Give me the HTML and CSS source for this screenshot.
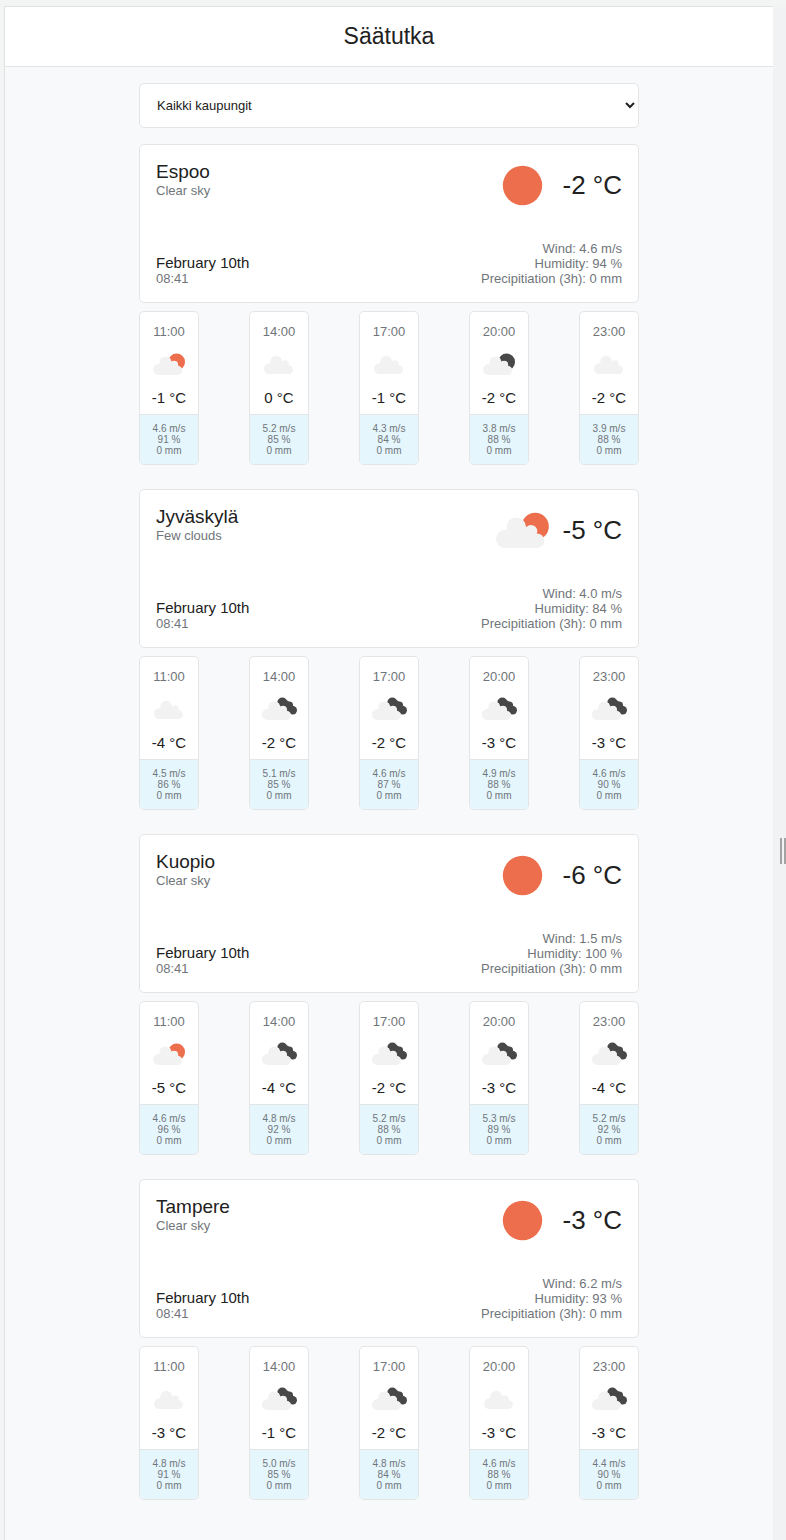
FILE: index.html
```html
<!DOCTYPE html>
<html lang="fi">
<head>
<meta charset="utf-8">
<meta name="viewport" content="width=device-width, initial-scale=1">
<title>Säätutka</title>
<link rel="stylesheet" href="styles.css">
</head>
<body>
<svg class="sprite" aria-hidden="true">
  <defs>
    <g id="cloud">
      <circle cx="12.5" cy="38.5" r="9"/>
      <circle cx="23.800" cy="26.800" r="9.800"/>
      <circle cx="38.500" cy="30.800" r="6.300"/>
      <circle cx="44.5" cy="40.2" r="7.300"/>
      <path d="M12.5 30 24 25 38 28 46 38V47.5H12.5Z"/>
    </g>
    <symbol id="clear" viewBox="-0.500 5.500 60 48"><circle class="sun" cx="30" cy="30" r="19.7"/></symbol>
    <symbol id="few-big" viewBox="-0.500 5.500 60 48"><circle class="sun" cx="42.700" cy="25.900" r="13.6"/><use href="#cloud" class="cloud"/></symbol>
    <symbol id="few" viewBox="0 1 60 60"><circle class="sun" cx="42.700" cy="25.900" r="14"/><use href="#cloud" class="cutout"/><use href="#cloud" class="cloud"/></symbol>
    <symbol id="night" viewBox="0 1 60 60"><circle class="dark" cx="42.700" cy="25.900" r="14"/><use href="#cloud" class="cutout"/><use href="#cloud" class="cloud"/></symbol>
    <symbol id="clouds" viewBox="0 1 60 60"><use href="#cloud" class="cloud" x="1.500" y="-1.500"/></symbol>
    <symbol id="broken" viewBox="0 1 60 60">
      <g class="dark"><circle cx="35.500" cy="18.500" r="8.300"/><circle cx="47" cy="23.500" r="6.500"/><circle cx="53" cy="31.500" r="7"/><path d="M30 18 38 11 49 19 57 28 52 38 44 35Z"/></g>
      <use href="#cloud" class="cutout" x="-2"/><use href="#cloud" class="cloud" x="-2"/>
    </symbol>
  </defs>
</svg>
<div class="window">
  <div class="app">
    <header class="header"><h1 class="title">Säätutka</h1></header>
    <main class="content">
      <select class="picker" aria-label="Kaupunki">
        <option>Kaikki kaupungit</option><option>Espoo</option><option>Jyväskylä</option><option>Kuopio</option><option>Tampere</option>
      </select>

      <section class="city">
        <article class="card">
          <div class="row">
            <div><h2 class="name">Espoo</h2><p class="muted">Clear sky</p></div>
            <div class="now"><svg class="icon"><use href="#clear"/></svg><span class="temp">-2 °C</span></div>
          </div>
          <div class="row row-end">
            <div><p class="date">February 10th</p><p class="muted">08:41</p></div>
            <div class="muted stats"><p>Wind: 4.6 m/s</p><p>Humidity: 94 %</p><p>Precipitiation (3h): 0 mm</p></div>
          </div>
        </article>
        <ul class="slots">
          <li class="slot"><div class="slot-main"><time>11:00</time><svg class="slot-icon"><use href="#few"/></svg><span class="slot-temp">-1 °C</span></div><div class="slot-stats"><p>4.6 m/s</p><p>91 %</p><p>0 mm</p></div></li>
          <li class="slot"><div class="slot-main"><time>14:00</time><svg class="slot-icon"><use href="#clouds"/></svg><span class="slot-temp">0 °C</span></div><div class="slot-stats"><p>5.2 m/s</p><p>85 %</p><p>0 mm</p></div></li>
          <li class="slot"><div class="slot-main"><time>17:00</time><svg class="slot-icon"><use href="#clouds"/></svg><span class="slot-temp">-1 °C</span></div><div class="slot-stats"><p>4.3 m/s</p><p>84 %</p><p>0 mm</p></div></li>
          <li class="slot"><div class="slot-main"><time>20:00</time><svg class="slot-icon"><use href="#night"/></svg><span class="slot-temp">-2 °C</span></div><div class="slot-stats"><p>3.8 m/s</p><p>88 %</p><p>0 mm</p></div></li>
          <li class="slot"><div class="slot-main"><time>23:00</time><svg class="slot-icon"><use href="#clouds"/></svg><span class="slot-temp">-2 °C</span></div><div class="slot-stats"><p>3.9 m/s</p><p>88 %</p><p>0 mm</p></div></li>
        </ul>
      </section>

      <section class="city">
        <article class="card">
          <div class="row">
            <div><h2 class="name">Jyväskylä</h2><p class="muted">Few clouds</p></div>
            <div class="now"><svg class="icon"><use href="#few-big"/></svg><span class="temp">-5 °C</span></div>
          </div>
          <div class="row row-end">
            <div><p class="date">February 10th</p><p class="muted">08:41</p></div>
            <div class="muted stats"><p>Wind: 4.0 m/s</p><p>Humidity: 84 %</p><p>Precipitiation (3h): 0 mm</p></div>
          </div>
        </article>
        <ul class="slots">
          <li class="slot"><div class="slot-main"><time>11:00</time><svg class="slot-icon"><use href="#clouds"/></svg><span class="slot-temp">-4 °C</span></div><div class="slot-stats"><p>4.5 m/s</p><p>86 %</p><p>0 mm</p></div></li>
          <li class="slot"><div class="slot-main"><time>14:00</time><svg class="slot-icon"><use href="#broken"/></svg><span class="slot-temp">-2 °C</span></div><div class="slot-stats"><p>5.1 m/s</p><p>85 %</p><p>0 mm</p></div></li>
          <li class="slot"><div class="slot-main"><time>17:00</time><svg class="slot-icon"><use href="#broken"/></svg><span class="slot-temp">-2 °C</span></div><div class="slot-stats"><p>4.6 m/s</p><p>87 %</p><p>0 mm</p></div></li>
          <li class="slot"><div class="slot-main"><time>20:00</time><svg class="slot-icon"><use href="#broken"/></svg><span class="slot-temp">-3 °C</span></div><div class="slot-stats"><p>4.9 m/s</p><p>88 %</p><p>0 mm</p></div></li>
          <li class="slot"><div class="slot-main"><time>23:00</time><svg class="slot-icon"><use href="#broken"/></svg><span class="slot-temp">-3 °C</span></div><div class="slot-stats"><p>4.6 m/s</p><p>90 %</p><p>0 mm</p></div></li>
        </ul>
      </section>

      <section class="city">
        <article class="card">
          <div class="row">
            <div><h2 class="name">Kuopio</h2><p class="muted">Clear sky</p></div>
            <div class="now"><svg class="icon"><use href="#clear"/></svg><span class="temp">-6 °C</span></div>
          </div>
          <div class="row row-end">
            <div><p class="date">February 10th</p><p class="muted">08:41</p></div>
            <div class="muted stats"><p>Wind: 1.5 m/s</p><p>Humidity: 100 %</p><p>Precipitiation (3h): 0 mm</p></div>
          </div>
        </article>
        <ul class="slots">
          <li class="slot"><div class="slot-main"><time>11:00</time><svg class="slot-icon"><use href="#few"/></svg><span class="slot-temp">-5 °C</span></div><div class="slot-stats"><p>4.6 m/s</p><p>96 %</p><p>0 mm</p></div></li>
          <li class="slot"><div class="slot-main"><time>14:00</time><svg class="slot-icon"><use href="#broken"/></svg><span class="slot-temp">-4 °C</span></div><div class="slot-stats"><p>4.8 m/s</p><p>92 %</p><p>0 mm</p></div></li>
          <li class="slot"><div class="slot-main"><time>17:00</time><svg class="slot-icon"><use href="#broken"/></svg><span class="slot-temp">-2 °C</span></div><div class="slot-stats"><p>5.2 m/s</p><p>88 %</p><p>0 mm</p></div></li>
          <li class="slot"><div class="slot-main"><time>20:00</time><svg class="slot-icon"><use href="#broken"/></svg><span class="slot-temp">-3 °C</span></div><div class="slot-stats"><p>5.3 m/s</p><p>89 %</p><p>0 mm</p></div></li>
          <li class="slot"><div class="slot-main"><time>23:00</time><svg class="slot-icon"><use href="#broken"/></svg><span class="slot-temp">-4 °C</span></div><div class="slot-stats"><p>5.2 m/s</p><p>92 %</p><p>0 mm</p></div></li>
        </ul>
      </section>

      <section class="city">
        <article class="card">
          <div class="row">
            <div><h2 class="name">Tampere</h2><p class="muted">Clear sky</p></div>
            <div class="now"><svg class="icon"><use href="#clear"/></svg><span class="temp">-3 °C</span></div>
          </div>
          <div class="row row-end">
            <div><p class="date">February 10th</p><p class="muted">08:41</p></div>
            <div class="muted stats"><p>Wind: 6.2 m/s</p><p>Humidity: 93 %</p><p>Precipitiation (3h): 0 mm</p></div>
          </div>
        </article>
        <ul class="slots">
          <li class="slot"><div class="slot-main"><time>11:00</time><svg class="slot-icon"><use href="#clouds"/></svg><span class="slot-temp">-3 °C</span></div><div class="slot-stats"><p>4.8 m/s</p><p>91 %</p><p>0 mm</p></div></li>
          <li class="slot"><div class="slot-main"><time>14:00</time><svg class="slot-icon"><use href="#broken"/></svg><span class="slot-temp">-1 °C</span></div><div class="slot-stats"><p>5.0 m/s</p><p>85 %</p><p>0 mm</p></div></li>
          <li class="slot"><div class="slot-main"><time>17:00</time><svg class="slot-icon"><use href="#broken"/></svg><span class="slot-temp">-2 °C</span></div><div class="slot-stats"><p>4.8 m/s</p><p>84 %</p><p>0 mm</p></div></li>
          <li class="slot"><div class="slot-main"><time>20:00</time><svg class="slot-icon"><use href="#clouds"/></svg><span class="slot-temp">-3 °C</span></div><div class="slot-stats"><p>4.6 m/s</p><p>88 %</p><p>0 mm</p></div></li>
          <li class="slot"><div class="slot-main"><time>23:00</time><svg class="slot-icon"><use href="#broken"/></svg><span class="slot-temp">-3 °C</span></div><div class="slot-stats"><p>4.4 m/s</p><p>90 %</p><p>0 mm</p></div></li>
        </ul>
      </section>
    </main>
  </div>
  <div class="gutter"><div class="handle"></div></div>
</div>
</body>
</html>
```
FILE: styles.css
```css
* {
  box-sizing: border-box;
}

body,
h1,
h2,
p,
ul {
  margin: 0;
  padding: 0;
  font-weight: 400;
}

body {
  background: #f3f5f4;
  color: #212121;
  font: 13px/15px "Liberation Sans", Arial, sans-serif;
}

.sprite {
  position: absolute;
  width: 0;
  height: 0;
}

.window {
  display: flex;
  min-height: 100vh;
  padding: 6px 0 0 4px;
}

.app {
  flex: 1;
  min-width: 0;
  border: solid #e0e1e2;
  border-width: 1px 0 0 1px;
  background: #f8f9fb;
}

.header {
  padding: 16px;
  background: #fff;
  border-bottom: 1px solid #e4e5e6;
  text-align: center;
}

.title {
  font-size: 23px;
  line-height: 27px;
}

.content {
  max-width: 532px;
  margin: 0 auto;
  padding: 16px;
}

.picker {
  display: block;
  width: 100%;
  height: 45px;
  margin-bottom: 16px;
  padding: 0 13px;
  border: 1px solid #e4e5e6;
  border-radius: 5px;
  background: #fff;
  color: #212121;
  font: inherit;
}

.city {
  margin-bottom: 24px;
}

.city:last-child {
  margin-bottom: 0;
}

.card {
  display: flex;
  flex-direction: column;
  justify-content: space-between;
  gap: 32px;
  padding: 16px;
  border: 1px solid #e4e5e6;
  border-radius: 5px;
  background: #fff;
}

.row {
  display: flex;
  justify-content: space-between;
}

.row-end {
  align-items: flex-end;
}

.name {
  font-size: 19px;
  line-height: 22px;
}

.muted {
  color: #70757a;
}

.date {
  font-size: 15px;
  line-height: 17px;
}

.stats {
  text-align: right;
}

.now {
  display: flex;
  align-items: center;
  gap: 10px;
}

.icon {
  width: 60px;
  height: 48px;
}

.temp {
  font-size: 26px;
  line-height: 30px;
}

.sun {
  fill: #ec6e4c;
}

.dark {
  fill: #484848;
}

.cloud {
  fill: #f2f2f2;
}

.cutout {
  fill: #fff;
  stroke: #fff;
  stroke-width: 1;
}

.slots {
  display: flex;
  justify-content: space-between;
  margin-top: 8px;
  list-style: none;
}

.slot {
  width: 60px;
  overflow: hidden;
  border: 1px solid #e4e5e6;
  border-radius: 5px;
  background: #fff;
  color: #70757a;
  text-align: center;
}

.slot-main {
  display: flex;
  flex-direction: column;
  align-items: center;
  padding: 12px 0 8px;
}

.slot-icon {
  width: 36px;
  height: 36px;
  margin: 8px 0 6px;
}

.slot-temp {
  color: #212121;
  font-size: 15px;
  line-height: 17px;
}

.slot-stats {
  padding: 8px 0;
  border-top: 1px solid #e4e5e6;
  background: #e5f6fd;
  font-size: 10px;
  line-height: 11px;
}

.gutter {
  display: flex;
  flex-direction: column;
  align-items: flex-end;
  width: 13px;
  margin-top: 1px;
  background: #f1f2f4;
}

.gutter::before {
  content: "";
  flex: 123;
}

.gutter::after {
  content: "";
  flex: 100;
}

.handle {
  width: 6px;
  height: 26px;
  border: solid #a3a3a3;
  border-width: 0 2px;
}
```
